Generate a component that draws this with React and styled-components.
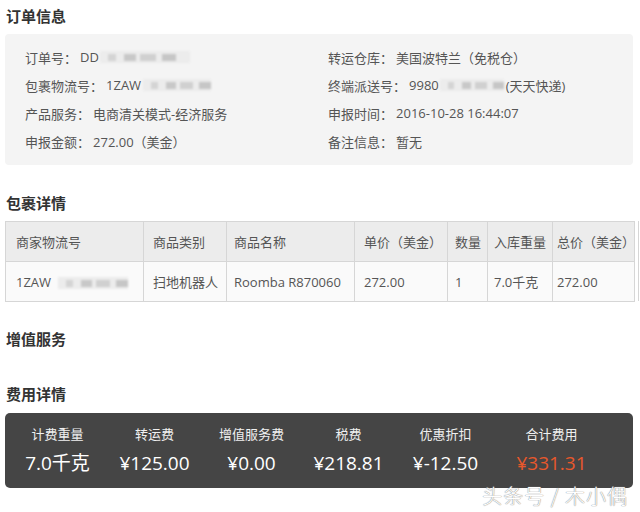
import React from "react";
import styled, { createGlobalStyle } from "styled-components";

const Global = createGlobalStyle`
  html, body { margin: 0; padding: 0; background: #fff; }
  body {
    font-family: "Open Sans", "Noto Sans CJK SC", sans-serif;
    color: #555;
    overflow: hidden;
  }
`;

const Page = styled.div`
  position: relative;
  width: 640px;
  height: 512px;
  padding: 6px 7px 0 5px;
  box-sizing: border-box;
  display: flex;
  flex-direction: column;
`;

const SectionTitle = styled.div`
  font-family: "Noto Sans CJK SC", sans-serif;
  font-size: 15px;
  font-weight: 700;
  color: #333;
  line-height: 20px;
  height: 20px;
  padding-left: 1px;
  margin-top: ${(p) => p.$mt || 0}px;
  margin-bottom: ${(p) => p.$mb || 8}px;
`;

const InfoBox = styled.div`
  background: #f4f4f4;
  border-radius: 4px;
  padding: 9px 0 10px 20px;
  display: grid;
  grid-template-columns: 303px 1fr;
  grid-auto-rows: 28px;
`;

const InfoRow = styled.div`
  display: flex;
  align-items: center;
  font-size: 13px;
  color: #555;
  white-space: nowrap;
`;

const Colon = styled.span`
  margin-right: 3px;
`;

const BlurWrap = styled.span`
  display: inline-flex;
  align-items: center;
  height: 12px;
  width: ${(p) => p.$w}px;
  margin: 0 ${(p) => p.$mr || 0}px 0 ${(p) => p.$ml || 0}px;
  background: #ececec;
  filter: blur(1px);
`;

const BlurSeg = styled.span`
  display: inline-block;
  height: 7px;
  background: ${(p) => p.$c};
  margin-left: ${(p) => p.$ml}px;
  width: ${(p) => p.$w}px;
`;

const Blur = ({ w, ml, mr }) => (
  <BlurWrap $w={w} $ml={ml} $mr={mr}>
    <BlurSeg $c="#d4d4d4" $ml={8} $w={8} />
    <BlurSeg $c="#c8c8c8" $ml={8} $w={12} />
    <BlurSeg $c="#d0d0d0" $ml={4} $w={16} />
    <BlurSeg $c="#c6c6c6" $ml={6} $w={14} />
  </BlurWrap>
);

const TableWrap = styled.div`
  display: flex;
  gap: 3px;
`;

const Table = styled.table`
  border-collapse: collapse;
  table-layout: fixed;
  width: 629px;
  font-size: 13px;
  color: #555;
`;

const Th = styled.th`
  height: 40px;
  padding: 0 0 0 ${(p) => p.$pl || 9}px;
  background: #ececec;
  border: 1px solid #d6d6d6;
  font-weight: 400;
  text-align: left;
  white-space: nowrap;
  overflow: visible;
  box-sizing: border-box;
`;

const Td = styled.td`
  height: 40px;
  padding: 0 0 0 ${(p) => p.$pl || 9}px;
  background: #fafafa;
  border: 1px solid #d6d6d6;
  white-space: nowrap;
  overflow: hidden;
  box-sizing: border-box;
`;

const NextCol = styled.div`
  width: 4px;
  height: 80px;
  border-left: 1px solid #d6d6d6;
  background: #fafafa;
`;

const FeeBox = styled.div`
  background: #454545;
  border-radius: 5px;
  height: 75px;
  display: flex;
  align-items: center;
  padding-left: 4px;
`;

const FeeItem = styled.div`
  width: ${(p) => p.$w || 97}px;
  display: flex;
  flex-direction: column;
  align-items: center;
`;

const FeeLabel = styled.div`
  font-family: "Noto Sans CJK SC", sans-serif;
  font-size: 13px;
  line-height: 18px;
  color: #f0f0f0;
`;

const FeeValue = styled.div`
  font-size: 19px;
  line-height: 26px;
  margin-top: 7px;
  color: ${(p) => (p.$accent ? "#e8582c" : "#ffffff")};
  white-space: nowrap;
`;

const Watermark = styled.div`
  position: absolute;
  right: 12px;
  top: 481px;
  font-family: "Noto Sans CJK SC", sans-serif;
  font-size: 20px;
  font-weight: 300;
  letter-spacing: 1px;
  color: #fff;
  text-shadow: 0 0 1px #8a8a8a, 0 0 1px #8a8a8a;
  white-space: nowrap;
`;

const C = () => <Colon>：</Colon>;

const info = [
  [<>订单号<C />DD<Blur w={90} ml={1} /></>, <>转运仓库<C />美国波特兰（免税仓）</>],
  [<>包裹物流号<C />1ZAW<Blur w={68} ml={2} /></>, <>终端派送号<C />9980<Blur w={64} ml={1} mr={2} />(天天快递)</>],
  [<>产品服务<C />电商清关模式-经济服务</>, <>申报时间<C />2016-10-28 16:44:07</>],
  [<>申报金额<C />272.00（美金）</>, <>备注信息<C />暂无</>],
];

const cols = [
  { w: 138, h: "商家物流号", v: <>1ZAW<Blur w={70} ml={7} /></>, pl: 10 },
  { w: 83, h: "商品类别", v: "扫地机器人", pl: 9 },
  { w: 128, h: "商品名称", v: "Roomba R870060", pl: 7 },
  { w: 93, h: "单价（美金）", v: "272.00", pl: 9 },
  { w: 40, h: "数量", v: "1", pl: 7 },
  { w: 65, h: "入库重量", v: "7.0千克", pl: 6 },
  { w: 82, h: "总价（美金）", v: "272.00", pl: 4 },
];

const fees = [
  { l: "计费重量", v: "7.0千克" },
  { l: "转运费", v: "¥125.00" },
  { l: "增值服务费", v: "¥0.00" },
  { l: "税费", v: "¥218.81" },
  { l: "优惠折扣", v: "¥-12.50" },
  { l: "合计费用", v: "¥331.31", accent: true, w: 115 },
];

export default function App() {
  return (
    <>
      <Global />
      <Page>
        <SectionTitle>订单信息</SectionTitle>
        <InfoBox>
          {info.flatMap((row, i) =>
            row.map((cell, j) => (
              <InfoRow key={`${i}-${j}`}>{cell}</InfoRow>
            ))
          )}
        </InfoBox>

        <SectionTitle $mt={28}>包裹详情</SectionTitle>
        <TableWrap>
          <Table>
            <colgroup>
              {cols.map((c, i) => (
                <col key={i} style={{ width: c.w }} />
              ))}
            </colgroup>
            <thead>
              <tr>
                {cols.map((c, i) => (
                  <Th key={i} $pl={c.pl}>{c.h}</Th>
                ))}
              </tr>
            </thead>
            <tbody>
              <tr>
                {cols.map((c, i) => (
                  <Td key={i} $pl={c.pl}>{c.v}</Td>
                ))}
              </tr>
            </tbody>
          </Table>
          <NextCol />
        </TableWrap>

        <SectionTitle $mt={27} $mb={0}>增值服务</SectionTitle>
        <SectionTitle $mt={27} $mb={9}>费用详情</SectionTitle>
        <FeeBox>
          {fees.map((f, i) => (
            <FeeItem key={i} $w={f.w}>
              <FeeLabel>{f.l}</FeeLabel>
              <FeeValue $accent={f.accent}>{f.v}</FeeValue>
            </FeeItem>
          ))}
        </FeeBox>
        <Watermark>头条号 / 木小偶</Watermark>
      </Page>
    </>
  );
}
